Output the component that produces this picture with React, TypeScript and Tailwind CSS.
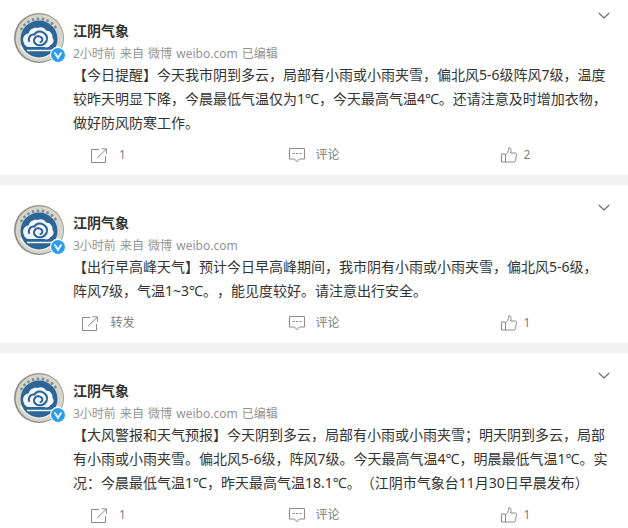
import React from "react";

const Logo = () => (
  <svg viewBox="0 0 50 50" className="w-full h-full">
    <circle cx="25" cy="25" r="25" fill="#8f8e86" />
    <circle cx="25.5" cy="25" r="23.8" fill="#d6d5cc" />
    <path d="M7 17A20 20 0 0 1 43 17" stroke="#7f8c90" strokeWidth="2.6" strokeDasharray="2.5 2.5" fill="none" />
    <path d="M6.5 33A21 21 0 0 0 44 33" stroke="#f2f1ea" strokeWidth="2" fill="none" />
    <circle cx="25" cy="26" r="18.5" fill="#2c6699" />
    <path d="M9.500 29c-1.500-4 1-8 5-8.500 1-4 5-6.500 9-5.500 3-1.500 7-.5 8.500 2.500 4 0 7 3.500 6.500 7.500 2 2 1 6-2 7-1 2-4 3-6 2H16c-3 .5-6-2-6.500-5.500z" fill="#f4f6f7" />
    <path d="M15 28c-1-4 2-7 5.500-6.500 1.500-3 5.500-4 8.500-2 3.500 1.500 5 5 3.500 8.500-1.500 3.500-5.500 5-9 4-3-1-4.500-4-3-6.500 1.500-2.500 5-3 7-1 1.500 1.500 1 4-1 4.500" fill="none" stroke="#2c6699" strokeWidth="2.100" strokeLinecap="round" />
    <path d="M13 37.500h22c3 0 5-1 6-3" fill="none" stroke="#f4f6f7" strokeWidth="1.600" />
  </svg>
);

const Badge = () => (
  <svg viewBox="0 0 16 16" className="w-full h-full">
    <circle cx="8" cy="8" r="8" fill="#ffffff" />
    <circle cx="8" cy="8" r="7" fill="#2d9fe6" />
    <path d="M4.600 5.400l3.400 5.400 3.400-5.400" fill="none" stroke="#ffffff" strokeWidth="1.800" />
  </svg>
);

const Chevron = () => (
  <svg width="12" height="8" viewBox="0 0 12 8" fill="none" stroke="#666666" strokeWidth="1.200">
    <path d="M0.800 1l5.200 5 5.200-5" />
  </svg>
);

const ShareIcon = () => (
  <svg width="17" height="15" viewBox="0 0 17 15" fill="none" stroke="#8a8a8a" strokeWidth="1">
    <path d="M8 1.500H0.500v13h14V8" />
    <path d="M6 10l9-8.500M10.500 0.800h5v5" />
  </svg>
);

const CommentIcon = () => (
  <svg width="16" height="15" viewBox="0 0 16 15" fill="none" stroke="#8a8a8a" strokeWidth="1">
    <path d="M0.500 0.500h15v10.500h-5l-2.500 2.800-2.500-2.800h-5z" />
    <path d="M3.500 5.500h9" strokeDasharray="2.200 1.200" />
  </svg>
);

const LikeIcon = () => (
  <svg width="16" height="16" viewBox="0 0 16 16" fill="none" stroke="#8a8a8a" strokeWidth="1">
    <path d="M0.500 7h4v8h-4z" />
    <path d="M4.500 7.500c2-1 3.200-3 3.200-6.500 1.600-.6 2.600.6 2.300 2.500L9.600 6h5c.8 0 1 .6.9 1.300l-1 6.400c-.1.800-.6 1.300-1.400 1.300H4.500" />
  </svg>
);

function Card({ meta, lines, share, like, last, first }: { meta: string; lines: string[]; share: string; like: string; last?: boolean; first?: boolean }) {
  return (
    <div className={`relative bg-white pt-[20px] ${first ? "-mt-[7px]" : ""} ${last ? "" : "border-b-[10px] border-[#f2f2f2]"}`}>
      <div className="absolute right-[18px] top-[19px]">
        <Chevron />
      </div>
      <div className="flex gap-[9px] pl-[14px] h-[50px]">
        <div className="relative w-[50px] h-[50px] shrink-0">
          <Logo />
          <div className="absolute right-[-2px] bottom-[0px] w-[16px] h-[16px]">
            <Badge />
          </div>
        </div>
        <div className="flex-1 pt-[8px]">
          <div className="text-[14px] leading-[20px] font-bold text-[#333333]">江阴气象</div>
          <div className="text-[12px] leading-[16px] mt-[5px] text-[#939393] [word-spacing:1px]">{meta}</div>
        </div>
      </div>
      <div className="pl-[73px] pr-[18px] text-[14px] leading-[24px] text-[#333333] whitespace-nowrap [text-spacing-trim:space-all]">
        {lines.map((l) => (
          <div key={l}>{l}</div>
        ))}
      </div>
      <div className="flex text-[12px] text-[#808080] h-[40px]">
        <div className="w-[217px] flex items-center justify-center gap-[11px]">
          <ShareIcon />
          <span>{share}</span>
        </div>
        <div className="w-[195px] flex items-center justify-center gap-[10px]">
          <CommentIcon />
          <span>评论</span>
        </div>
        <div className="w-[207px] flex items-center justify-center gap-[7px]">
          <LikeIcon />
          <span>{like}</span>
        </div>
      </div>
    </div>
  );
}

export default function App() {
  return (
    <div className="w-[628px] h-[528px] overflow-hidden bg-white font-['Noto_Sans','Noto_Sans_CJK_SC',sans-serif]">
      <Card
        first
        meta="2小时前 来自 微博 weibo.com 已编辑"
        lines={[
          "【今日提醒】今天我市阴到多云，局部有小雨或小雨夹雪，偏北风5-6级阵风7级，温度",
          "较昨天明显下降，今晨最低气温仅为1℃，今天最高气温4℃。还请注意及时增加衣物，",
          "做好防风防寒工作。",
        ]}
        share="1"
        like="2"
      />
      <Card
        meta="3小时前 来自 微博 weibo.com"
        lines={[
          "【出行早高峰天气】预计今日早高峰期间，我市阴有小雨或小雨夹雪，偏北风5-6级，",
          "阵风7级，气温1~3℃。，能见度较好。请注意出行安全。",
        ]}
        share="转发"
        like="1"
      />
      <Card
        last
        meta="3小时前 来自 微博 weibo.com 已编辑"
        lines={[
          "【大风警报和天气预报】今天阴到多云，局部有小雨或小雨夹雪；明天阴到多云，局部",
          "有小雨或小雨夹雪。偏北风5-6级，阵风7级。今天最高气温4℃，明晨最低气温1℃。实",
          "况：今晨最低气温1℃，昨天最高气温18.1℃。（江阴市气象台11月30日早晨发布）",
        ]}
        share="1"
        like="1"
      />
    </div>
  );
}
